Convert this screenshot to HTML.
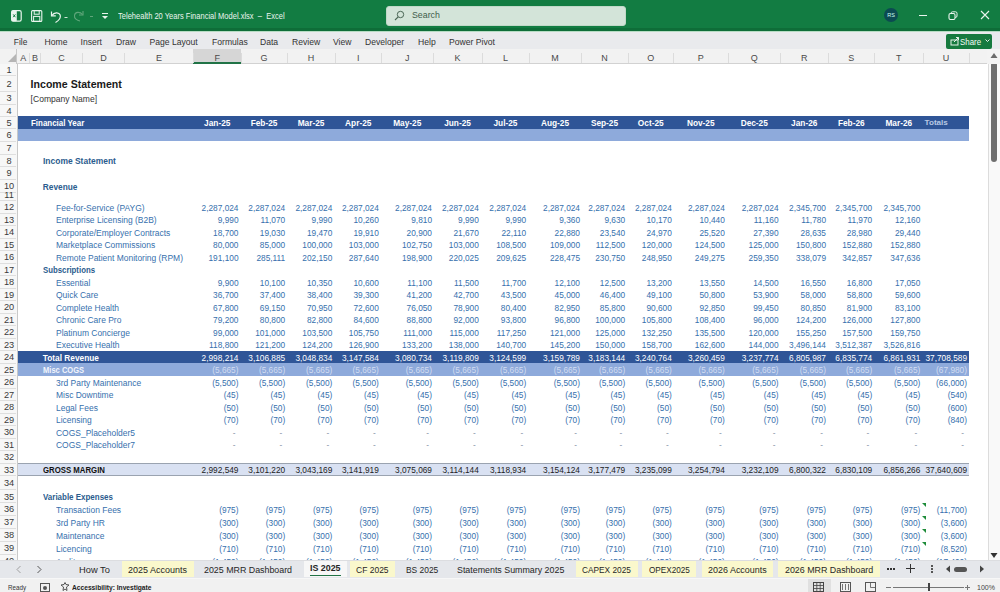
<!DOCTYPE html>
<html><head><meta charset="utf-8"><style>
*{box-sizing:border-box}
html,body{margin:0;padding:0}
body{width:1000px;height:592px;overflow:hidden;position:relative;background:#fff;font-family:"Liberation Sans",sans-serif}
.t{position:absolute;white-space:nowrap;font-size:8.3px;color:#3670ad}
.r{text-align:right}
.c{text-align:center}
.b{position:absolute}
.bd{font-weight:bold}
.abs{position:absolute}
</style></head><body>

<div class="b" style="left:17px;top:116px;width:952px;height:12.5px;background:#2f5597;"></div>
<div class="b" style="left:17px;top:128.5px;width:952px;height:12.5px;background:#8eaadb;"></div>
<div class="b" style="left:17px;top:350.5px;width:952px;height:12.5px;background:#2f5597;"></div>
<div class="b" style="left:17px;top:363.0px;width:952px;height:12.5px;background:#8eaadb;"></div>
<div class="b" style="left:17px;top:463.0px;width:952px;height:12.5px;background:#d9e1f2;border-top:1px solid #9aa3b0;border-bottom:1px solid #9aa3b0;"></div>
<div class="t bd" style="left:30.6px;top:75.7px;height:16.0px;line-height:16.0px;font-size:10.6px;color:#1a1a1a;">Income Statement</div>
<div class="t " style="left:30.6px;top:92.7px;height:12.5px;line-height:12.5px;font-size:8.56px;color:#333;">[Company Name]</div>
<div class="t bd" style="left:30.6px;top:117.2px;height:12.5px;line-height:12.5px;color:#fff;font-size:8.3px;transform:scaleX(0.957);transform-origin:0 50%;">Financial Year</div>
<div class="t c bd" style="left:193.5px;width:47.5px;top:117.2px;height:12.5px;line-height:12.5px;color:#fff;font-size:8.3px;">Jan-25</div>
<div class="t c bd" style="left:241px;width:46px;top:117.2px;height:12.5px;line-height:12.5px;color:#fff;font-size:8.3px;">Feb-25</div>
<div class="t c bd" style="left:287px;width:48px;top:117.2px;height:12.5px;line-height:12.5px;color:#fff;font-size:8.3px;">Mar-25</div>
<div class="t c bd" style="left:335px;width:46.5px;top:117.2px;height:12.5px;line-height:12.5px;color:#fff;font-size:8.3px;">Apr-25</div>
<div class="t c bd" style="left:381.5px;width:51.5px;top:117.2px;height:12.5px;line-height:12.5px;color:#fff;font-size:8.3px;">May-25</div>
<div class="t c bd" style="left:433px;width:49px;top:117.2px;height:12.5px;line-height:12.5px;color:#fff;font-size:8.3px;">Jun-25</div>
<div class="t c bd" style="left:482px;width:47px;top:117.2px;height:12.5px;line-height:12.5px;color:#fff;font-size:8.3px;">Jul-25</div>
<div class="t c bd" style="left:529px;width:52px;top:117.2px;height:12.5px;line-height:12.5px;color:#fff;font-size:8.3px;">Aug-25</div>
<div class="t c bd" style="left:581px;width:47px;top:117.2px;height:12.5px;line-height:12.5px;color:#fff;font-size:8.3px;">Sep-25</div>
<div class="t c bd" style="left:628px;width:45.5px;top:117.2px;height:12.5px;line-height:12.5px;color:#fff;font-size:8.3px;">Oct-25</div>
<div class="t c bd" style="left:673.5px;width:54.5px;top:117.2px;height:12.5px;line-height:12.5px;color:#fff;font-size:8.3px;">Nov-25</div>
<div class="t c bd" style="left:728px;width:52.5px;top:117.2px;height:12.5px;line-height:12.5px;color:#fff;font-size:8.3px;">Dec-25</div>
<div class="t c bd" style="left:780.5px;width:47.5px;top:117.2px;height:12.5px;line-height:12.5px;color:#fff;font-size:8.3px;">Jan-26</div>
<div class="t c bd" style="left:828px;width:46.5px;top:117.2px;height:12.5px;line-height:12.5px;color:#fff;font-size:8.3px;">Feb-26</div>
<div class="t c bd" style="left:874.5px;width:48.5px;top:117.2px;height:12.5px;line-height:12.5px;color:#fff;font-size:8.3px;">Mar-26</div>
<div class="t bd" style="left:924.6px;top:117.2px;height:12.5px;line-height:12.5px;color:#b9c8e4;font-size:8.1px;">Totals</div>
<div class="t bd" style="left:42.8px;top:155.2px;height:12.699999999999989px;line-height:12.699999999999989px;color:#2b5c8e;font-size:8.3px;transform:scaleX(1.02);transform-origin:0 50%;">Income Statement</div>
<div class="t bd" style="left:42.8px;top:180.5px;height:12.699999999999989px;line-height:12.699999999999989px;color:#2b5c8e;font-size:8.3px;transform:scaleX(1.0);transform-origin:0 50%;">Revenue</div>
<div class="t bd" style="left:42.8px;top:264.2px;height:12.5px;line-height:12.5px;color:#2b5c8e;font-size:8.3px;transform:scaleX(0.94);transform-origin:0 50%;">Subscriptions</div>
<div class="t bd" style="left:42.8px;top:491.09999999999997px;height:12.899999999999977px;line-height:12.899999999999977px;color:#2b5c8e;font-size:8.3px;transform:scaleX(0.96);transform-origin:0 50%;">Variable Expenses</div>
<div class="t " style="left:55.5px;top:201.7px;height:12.5px;line-height:12.5px;font-size:8.3px;transform:scaleX(1.02);transform-origin:0 50%;">Fee-for-Service (PAYG)</div>
<div class="t r " style="left:193.5px;width:45.0px;top:201.7px;height:12.5px;line-height:12.5px;">2,287,024</div>
<div class="t r " style="left:241px;width:44.19999999999999px;top:201.7px;height:12.5px;line-height:12.5px;">2,287,024</div>
<div class="t r " style="left:287px;width:45.30000000000001px;top:201.7px;height:12.5px;line-height:12.5px;">2,287,024</div>
<div class="t r " style="left:335px;width:43.80000000000001px;top:201.7px;height:12.5px;line-height:12.5px;">2,287,024</div>
<div class="t r " style="left:381.5px;width:50.5px;top:201.7px;height:12.5px;line-height:12.5px;">2,287,024</div>
<div class="t r " style="left:433px;width:45.80000000000001px;top:201.7px;height:12.5px;line-height:12.5px;">2,287,024</div>
<div class="t r " style="left:482px;width:44.200000000000045px;top:201.7px;height:12.5px;line-height:12.5px;">2,287,024</div>
<div class="t r " style="left:529px;width:51px;top:201.7px;height:12.5px;line-height:12.5px;">2,287,024</div>
<div class="t r " style="left:581px;width:44.200000000000045px;top:201.7px;height:12.5px;line-height:12.5px;">2,287,024</div>
<div class="t r " style="left:628px;width:43.799999999999955px;top:201.7px;height:12.5px;line-height:12.5px;">2,287,024</div>
<div class="t r " style="left:673.5px;width:51.299999999999955px;top:201.7px;height:12.5px;line-height:12.5px;">2,287,024</div>
<div class="t r " style="left:728px;width:50.60000000000002px;top:201.7px;height:12.5px;line-height:12.5px;">2,287,024</div>
<div class="t r " style="left:780.5px;width:45.5px;top:201.7px;height:12.5px;line-height:12.5px;">2,345,700</div>
<div class="t r " style="left:828px;width:44.200000000000045px;top:201.7px;height:12.5px;line-height:12.5px;">2,345,700</div>
<div class="t r " style="left:874.5px;width:45.799999999999955px;top:201.7px;height:12.5px;line-height:12.5px;">2,345,700</div>
<div class="t " style="left:55.5px;top:214.2px;height:12.5px;line-height:12.5px;font-size:8.3px;transform:scaleX(1.02);transform-origin:0 50%;">Enterprise Licensing (B2B)</div>
<div class="t r " style="left:193.5px;width:45.0px;top:214.2px;height:12.5px;line-height:12.5px;">9,990</div>
<div class="t r " style="left:241px;width:44.19999999999999px;top:214.2px;height:12.5px;line-height:12.5px;">11,070</div>
<div class="t r " style="left:287px;width:45.30000000000001px;top:214.2px;height:12.5px;line-height:12.5px;">9,990</div>
<div class="t r " style="left:335px;width:43.80000000000001px;top:214.2px;height:12.5px;line-height:12.5px;">10,260</div>
<div class="t r " style="left:381.5px;width:50.5px;top:214.2px;height:12.5px;line-height:12.5px;">9,810</div>
<div class="t r " style="left:433px;width:45.80000000000001px;top:214.2px;height:12.5px;line-height:12.5px;">9,990</div>
<div class="t r " style="left:482px;width:44.200000000000045px;top:214.2px;height:12.5px;line-height:12.5px;">9,990</div>
<div class="t r " style="left:529px;width:51px;top:214.2px;height:12.5px;line-height:12.5px;">9,360</div>
<div class="t r " style="left:581px;width:44.200000000000045px;top:214.2px;height:12.5px;line-height:12.5px;">9,630</div>
<div class="t r " style="left:628px;width:43.799999999999955px;top:214.2px;height:12.5px;line-height:12.5px;">10,170</div>
<div class="t r " style="left:673.5px;width:51.299999999999955px;top:214.2px;height:12.5px;line-height:12.5px;">10,440</div>
<div class="t r " style="left:728px;width:50.60000000000002px;top:214.2px;height:12.5px;line-height:12.5px;">11,160</div>
<div class="t r " style="left:780.5px;width:45.5px;top:214.2px;height:12.5px;line-height:12.5px;">11,780</div>
<div class="t r " style="left:828px;width:44.200000000000045px;top:214.2px;height:12.5px;line-height:12.5px;">11,970</div>
<div class="t r " style="left:874.5px;width:45.799999999999955px;top:214.2px;height:12.5px;line-height:12.5px;">12,160</div>
<div class="t " style="left:55.5px;top:226.7px;height:12.5px;line-height:12.5px;font-size:8.3px;transform:scaleX(1.02);transform-origin:0 50%;">Corporate/Employer Contracts</div>
<div class="t r " style="left:193.5px;width:45.0px;top:226.7px;height:12.5px;line-height:12.5px;">18,700</div>
<div class="t r " style="left:241px;width:44.19999999999999px;top:226.7px;height:12.5px;line-height:12.5px;">19,030</div>
<div class="t r " style="left:287px;width:45.30000000000001px;top:226.7px;height:12.5px;line-height:12.5px;">19,470</div>
<div class="t r " style="left:335px;width:43.80000000000001px;top:226.7px;height:12.5px;line-height:12.5px;">19,910</div>
<div class="t r " style="left:381.5px;width:50.5px;top:226.7px;height:12.5px;line-height:12.5px;">20,900</div>
<div class="t r " style="left:433px;width:45.80000000000001px;top:226.7px;height:12.5px;line-height:12.5px;">21,670</div>
<div class="t r " style="left:482px;width:44.200000000000045px;top:226.7px;height:12.5px;line-height:12.5px;">22,110</div>
<div class="t r " style="left:529px;width:51px;top:226.7px;height:12.5px;line-height:12.5px;">22,880</div>
<div class="t r " style="left:581px;width:44.200000000000045px;top:226.7px;height:12.5px;line-height:12.5px;">23,540</div>
<div class="t r " style="left:628px;width:43.799999999999955px;top:226.7px;height:12.5px;line-height:12.5px;">24,970</div>
<div class="t r " style="left:673.5px;width:51.299999999999955px;top:226.7px;height:12.5px;line-height:12.5px;">25,520</div>
<div class="t r " style="left:728px;width:50.60000000000002px;top:226.7px;height:12.5px;line-height:12.5px;">27,390</div>
<div class="t r " style="left:780.5px;width:45.5px;top:226.7px;height:12.5px;line-height:12.5px;">28,635</div>
<div class="t r " style="left:828px;width:44.200000000000045px;top:226.7px;height:12.5px;line-height:12.5px;">28,980</div>
<div class="t r " style="left:874.5px;width:45.799999999999955px;top:226.7px;height:12.5px;line-height:12.5px;">29,440</div>
<div class="t " style="left:55.5px;top:239.2px;height:12.5px;line-height:12.5px;font-size:8.3px;transform:scaleX(1.02);transform-origin:0 50%;">Marketplace Commissions</div>
<div class="t r " style="left:193.5px;width:45.0px;top:239.2px;height:12.5px;line-height:12.5px;">80,000</div>
<div class="t r " style="left:241px;width:44.19999999999999px;top:239.2px;height:12.5px;line-height:12.5px;">85,000</div>
<div class="t r " style="left:287px;width:45.30000000000001px;top:239.2px;height:12.5px;line-height:12.5px;">100,000</div>
<div class="t r " style="left:335px;width:43.80000000000001px;top:239.2px;height:12.5px;line-height:12.5px;">103,000</div>
<div class="t r " style="left:381.5px;width:50.5px;top:239.2px;height:12.5px;line-height:12.5px;">102,750</div>
<div class="t r " style="left:433px;width:45.80000000000001px;top:239.2px;height:12.5px;line-height:12.5px;">103,000</div>
<div class="t r " style="left:482px;width:44.200000000000045px;top:239.2px;height:12.5px;line-height:12.5px;">108,500</div>
<div class="t r " style="left:529px;width:51px;top:239.2px;height:12.5px;line-height:12.5px;">109,000</div>
<div class="t r " style="left:581px;width:44.200000000000045px;top:239.2px;height:12.5px;line-height:12.5px;">112,500</div>
<div class="t r " style="left:628px;width:43.799999999999955px;top:239.2px;height:12.5px;line-height:12.5px;">120,000</div>
<div class="t r " style="left:673.5px;width:51.299999999999955px;top:239.2px;height:12.5px;line-height:12.5px;">124,500</div>
<div class="t r " style="left:728px;width:50.60000000000002px;top:239.2px;height:12.5px;line-height:12.5px;">125,000</div>
<div class="t r " style="left:780.5px;width:45.5px;top:239.2px;height:12.5px;line-height:12.5px;">150,800</div>
<div class="t r " style="left:828px;width:44.200000000000045px;top:239.2px;height:12.5px;line-height:12.5px;">152,880</div>
<div class="t r " style="left:874.5px;width:45.799999999999955px;top:239.2px;height:12.5px;line-height:12.5px;">152,880</div>
<div class="t " style="left:55.5px;top:251.7px;height:12.5px;line-height:12.5px;font-size:8.3px;transform:scaleX(1.02);transform-origin:0 50%;">Remote Patient Monitoring (RPM)</div>
<div class="t r " style="left:193.5px;width:45.0px;top:251.7px;height:12.5px;line-height:12.5px;">191,100</div>
<div class="t r " style="left:241px;width:44.19999999999999px;top:251.7px;height:12.5px;line-height:12.5px;">285,111</div>
<div class="t r " style="left:287px;width:45.30000000000001px;top:251.7px;height:12.5px;line-height:12.5px;">202,150</div>
<div class="t r " style="left:335px;width:43.80000000000001px;top:251.7px;height:12.5px;line-height:12.5px;">287,640</div>
<div class="t r " style="left:381.5px;width:50.5px;top:251.7px;height:12.5px;line-height:12.5px;">198,900</div>
<div class="t r " style="left:433px;width:45.80000000000001px;top:251.7px;height:12.5px;line-height:12.5px;">220,025</div>
<div class="t r " style="left:482px;width:44.200000000000045px;top:251.7px;height:12.5px;line-height:12.5px;">209,625</div>
<div class="t r " style="left:529px;width:51px;top:251.7px;height:12.5px;line-height:12.5px;">228,475</div>
<div class="t r " style="left:581px;width:44.200000000000045px;top:251.7px;height:12.5px;line-height:12.5px;">230,750</div>
<div class="t r " style="left:628px;width:43.799999999999955px;top:251.7px;height:12.5px;line-height:12.5px;">248,950</div>
<div class="t r " style="left:673.5px;width:51.299999999999955px;top:251.7px;height:12.5px;line-height:12.5px;">249,275</div>
<div class="t r " style="left:728px;width:50.60000000000002px;top:251.7px;height:12.5px;line-height:12.5px;">259,350</div>
<div class="t r " style="left:780.5px;width:45.5px;top:251.7px;height:12.5px;line-height:12.5px;">338,079</div>
<div class="t r " style="left:828px;width:44.200000000000045px;top:251.7px;height:12.5px;line-height:12.5px;">342,857</div>
<div class="t r " style="left:874.5px;width:45.799999999999955px;top:251.7px;height:12.5px;line-height:12.5px;">347,636</div>
<div class="t " style="left:55.5px;top:276.7px;height:12.5px;line-height:12.5px;font-size:8.3px;transform:scaleX(1.02);transform-origin:0 50%;">Essential</div>
<div class="t r " style="left:193.5px;width:45.0px;top:276.7px;height:12.5px;line-height:12.5px;">9,900</div>
<div class="t r " style="left:241px;width:44.19999999999999px;top:276.7px;height:12.5px;line-height:12.5px;">10,100</div>
<div class="t r " style="left:287px;width:45.30000000000001px;top:276.7px;height:12.5px;line-height:12.5px;">10,350</div>
<div class="t r " style="left:335px;width:43.80000000000001px;top:276.7px;height:12.5px;line-height:12.5px;">10,600</div>
<div class="t r " style="left:381.5px;width:50.5px;top:276.7px;height:12.5px;line-height:12.5px;">11,100</div>
<div class="t r " style="left:433px;width:45.80000000000001px;top:276.7px;height:12.5px;line-height:12.5px;">11,500</div>
<div class="t r " style="left:482px;width:44.200000000000045px;top:276.7px;height:12.5px;line-height:12.5px;">11,700</div>
<div class="t r " style="left:529px;width:51px;top:276.7px;height:12.5px;line-height:12.5px;">12,100</div>
<div class="t r " style="left:581px;width:44.200000000000045px;top:276.7px;height:12.5px;line-height:12.5px;">12,500</div>
<div class="t r " style="left:628px;width:43.799999999999955px;top:276.7px;height:12.5px;line-height:12.5px;">13,200</div>
<div class="t r " style="left:673.5px;width:51.299999999999955px;top:276.7px;height:12.5px;line-height:12.5px;">13,550</div>
<div class="t r " style="left:728px;width:50.60000000000002px;top:276.7px;height:12.5px;line-height:12.5px;">14,500</div>
<div class="t r " style="left:780.5px;width:45.5px;top:276.7px;height:12.5px;line-height:12.5px;">16,550</div>
<div class="t r " style="left:828px;width:44.200000000000045px;top:276.7px;height:12.5px;line-height:12.5px;">16,800</div>
<div class="t r " style="left:874.5px;width:45.799999999999955px;top:276.7px;height:12.5px;line-height:12.5px;">17,050</div>
<div class="t " style="left:55.5px;top:289.2px;height:12.5px;line-height:12.5px;font-size:8.3px;transform:scaleX(1.02);transform-origin:0 50%;">Quick Care</div>
<div class="t r " style="left:193.5px;width:45.0px;top:289.2px;height:12.5px;line-height:12.5px;">36,700</div>
<div class="t r " style="left:241px;width:44.19999999999999px;top:289.2px;height:12.5px;line-height:12.5px;">37,400</div>
<div class="t r " style="left:287px;width:45.30000000000001px;top:289.2px;height:12.5px;line-height:12.5px;">38,400</div>
<div class="t r " style="left:335px;width:43.80000000000001px;top:289.2px;height:12.5px;line-height:12.5px;">39,300</div>
<div class="t r " style="left:381.5px;width:50.5px;top:289.2px;height:12.5px;line-height:12.5px;">41,200</div>
<div class="t r " style="left:433px;width:45.80000000000001px;top:289.2px;height:12.5px;line-height:12.5px;">42,700</div>
<div class="t r " style="left:482px;width:44.200000000000045px;top:289.2px;height:12.5px;line-height:12.5px;">43,500</div>
<div class="t r " style="left:529px;width:51px;top:289.2px;height:12.5px;line-height:12.5px;">45,000</div>
<div class="t r " style="left:581px;width:44.200000000000045px;top:289.2px;height:12.5px;line-height:12.5px;">46,400</div>
<div class="t r " style="left:628px;width:43.799999999999955px;top:289.2px;height:12.5px;line-height:12.5px;">49,100</div>
<div class="t r " style="left:673.5px;width:51.299999999999955px;top:289.2px;height:12.5px;line-height:12.5px;">50,800</div>
<div class="t r " style="left:728px;width:50.60000000000002px;top:289.2px;height:12.5px;line-height:12.5px;">53,900</div>
<div class="t r " style="left:780.5px;width:45.5px;top:289.2px;height:12.5px;line-height:12.5px;">58,000</div>
<div class="t r " style="left:828px;width:44.200000000000045px;top:289.2px;height:12.5px;line-height:12.5px;">58,800</div>
<div class="t r " style="left:874.5px;width:45.799999999999955px;top:289.2px;height:12.5px;line-height:12.5px;">59,600</div>
<div class="t " style="left:55.5px;top:301.7px;height:12.5px;line-height:12.5px;font-size:8.3px;transform:scaleX(1.02);transform-origin:0 50%;">Complete Health</div>
<div class="t r " style="left:193.5px;width:45.0px;top:301.7px;height:12.5px;line-height:12.5px;">67,800</div>
<div class="t r " style="left:241px;width:44.19999999999999px;top:301.7px;height:12.5px;line-height:12.5px;">69,150</div>
<div class="t r " style="left:287px;width:45.30000000000001px;top:301.7px;height:12.5px;line-height:12.5px;">70,950</div>
<div class="t r " style="left:335px;width:43.80000000000001px;top:301.7px;height:12.5px;line-height:12.5px;">72,600</div>
<div class="t r " style="left:381.5px;width:50.5px;top:301.7px;height:12.5px;line-height:12.5px;">76,050</div>
<div class="t r " style="left:433px;width:45.80000000000001px;top:301.7px;height:12.5px;line-height:12.5px;">78,900</div>
<div class="t r " style="left:482px;width:44.200000000000045px;top:301.7px;height:12.5px;line-height:12.5px;">80,400</div>
<div class="t r " style="left:529px;width:51px;top:301.7px;height:12.5px;line-height:12.5px;">82,950</div>
<div class="t r " style="left:581px;width:44.200000000000045px;top:301.7px;height:12.5px;line-height:12.5px;">85,800</div>
<div class="t r " style="left:628px;width:43.799999999999955px;top:301.7px;height:12.5px;line-height:12.5px;">90,600</div>
<div class="t r " style="left:673.5px;width:51.299999999999955px;top:301.7px;height:12.5px;line-height:12.5px;">92,850</div>
<div class="t r " style="left:728px;width:50.60000000000002px;top:301.7px;height:12.5px;line-height:12.5px;">99,450</div>
<div class="t r " style="left:780.5px;width:45.5px;top:301.7px;height:12.5px;line-height:12.5px;">80,850</div>
<div class="t r " style="left:828px;width:44.200000000000045px;top:301.7px;height:12.5px;line-height:12.5px;">81,900</div>
<div class="t r " style="left:874.5px;width:45.799999999999955px;top:301.7px;height:12.5px;line-height:12.5px;">83,100</div>
<div class="t " style="left:55.5px;top:314.2px;height:12.5px;line-height:12.5px;font-size:8.3px;transform:scaleX(1.02);transform-origin:0 50%;">Chronic Care Pro</div>
<div class="t r " style="left:193.5px;width:45.0px;top:314.2px;height:12.5px;line-height:12.5px;">79,200</div>
<div class="t r " style="left:241px;width:44.19999999999999px;top:314.2px;height:12.5px;line-height:12.5px;">80,800</div>
<div class="t r " style="left:287px;width:45.30000000000001px;top:314.2px;height:12.5px;line-height:12.5px;">82,800</div>
<div class="t r " style="left:335px;width:43.80000000000001px;top:314.2px;height:12.5px;line-height:12.5px;">84,600</div>
<div class="t r " style="left:381.5px;width:50.5px;top:314.2px;height:12.5px;line-height:12.5px;">88,800</div>
<div class="t r " style="left:433px;width:45.80000000000001px;top:314.2px;height:12.5px;line-height:12.5px;">92,000</div>
<div class="t r " style="left:482px;width:44.200000000000045px;top:314.2px;height:12.5px;line-height:12.5px;">93,800</div>
<div class="t r " style="left:529px;width:51px;top:314.2px;height:12.5px;line-height:12.5px;">96,800</div>
<div class="t r " style="left:581px;width:44.200000000000045px;top:314.2px;height:12.5px;line-height:12.5px;">100,000</div>
<div class="t r " style="left:628px;width:43.799999999999955px;top:314.2px;height:12.5px;line-height:12.5px;">105,800</div>
<div class="t r " style="left:673.5px;width:51.299999999999955px;top:314.2px;height:12.5px;line-height:12.5px;">108,400</div>
<div class="t r " style="left:728px;width:50.60000000000002px;top:314.2px;height:12.5px;line-height:12.5px;">96,000</div>
<div class="t r " style="left:780.5px;width:45.5px;top:314.2px;height:12.5px;line-height:12.5px;">124,200</div>
<div class="t r " style="left:828px;width:44.200000000000045px;top:314.2px;height:12.5px;line-height:12.5px;">126,000</div>
<div class="t r " style="left:874.5px;width:45.799999999999955px;top:314.2px;height:12.5px;line-height:12.5px;">127,800</div>
<div class="t " style="left:55.5px;top:326.7px;height:12.5px;line-height:12.5px;font-size:8.3px;transform:scaleX(1.02);transform-origin:0 50%;">Platinum Concierge</div>
<div class="t r " style="left:193.5px;width:45.0px;top:326.7px;height:12.5px;line-height:12.5px;">99,000</div>
<div class="t r " style="left:241px;width:44.19999999999999px;top:326.7px;height:12.5px;line-height:12.5px;">101,000</div>
<div class="t r " style="left:287px;width:45.30000000000001px;top:326.7px;height:12.5px;line-height:12.5px;">103,500</div>
<div class="t r " style="left:335px;width:43.80000000000001px;top:326.7px;height:12.5px;line-height:12.5px;">105,750</div>
<div class="t r " style="left:381.5px;width:50.5px;top:326.7px;height:12.5px;line-height:12.5px;">111,000</div>
<div class="t r " style="left:433px;width:45.80000000000001px;top:326.7px;height:12.5px;line-height:12.5px;">115,000</div>
<div class="t r " style="left:482px;width:44.200000000000045px;top:326.7px;height:12.5px;line-height:12.5px;">117,250</div>
<div class="t r " style="left:529px;width:51px;top:326.7px;height:12.5px;line-height:12.5px;">121,000</div>
<div class="t r " style="left:581px;width:44.200000000000045px;top:326.7px;height:12.5px;line-height:12.5px;">125,000</div>
<div class="t r " style="left:628px;width:43.799999999999955px;top:326.7px;height:12.5px;line-height:12.5px;">132,250</div>
<div class="t r " style="left:673.5px;width:51.299999999999955px;top:326.7px;height:12.5px;line-height:12.5px;">135,500</div>
<div class="t r " style="left:728px;width:50.60000000000002px;top:326.7px;height:12.5px;line-height:12.5px;">120,000</div>
<div class="t r " style="left:780.5px;width:45.5px;top:326.7px;height:12.5px;line-height:12.5px;">155,250</div>
<div class="t r " style="left:828px;width:44.200000000000045px;top:326.7px;height:12.5px;line-height:12.5px;">157,500</div>
<div class="t r " style="left:874.5px;width:45.799999999999955px;top:326.7px;height:12.5px;line-height:12.5px;">159,750</div>
<div class="t " style="left:55.5px;top:339.2px;height:12.5px;line-height:12.5px;font-size:8.3px;transform:scaleX(1.02);transform-origin:0 50%;">Executive Health</div>
<div class="t r " style="left:193.5px;width:45.0px;top:339.2px;height:12.5px;line-height:12.5px;">118,800</div>
<div class="t r " style="left:241px;width:44.19999999999999px;top:339.2px;height:12.5px;line-height:12.5px;">121,200</div>
<div class="t r " style="left:287px;width:45.30000000000001px;top:339.2px;height:12.5px;line-height:12.5px;">124,200</div>
<div class="t r " style="left:335px;width:43.80000000000001px;top:339.2px;height:12.5px;line-height:12.5px;">126,900</div>
<div class="t r " style="left:381.5px;width:50.5px;top:339.2px;height:12.5px;line-height:12.5px;">133,200</div>
<div class="t r " style="left:433px;width:45.80000000000001px;top:339.2px;height:12.5px;line-height:12.5px;">138,000</div>
<div class="t r " style="left:482px;width:44.200000000000045px;top:339.2px;height:12.5px;line-height:12.5px;">140,700</div>
<div class="t r " style="left:529px;width:51px;top:339.2px;height:12.5px;line-height:12.5px;">145,200</div>
<div class="t r " style="left:581px;width:44.200000000000045px;top:339.2px;height:12.5px;line-height:12.5px;">150,000</div>
<div class="t r " style="left:628px;width:43.799999999999955px;top:339.2px;height:12.5px;line-height:12.5px;">158,700</div>
<div class="t r " style="left:673.5px;width:51.299999999999955px;top:339.2px;height:12.5px;line-height:12.5px;">162,600</div>
<div class="t r " style="left:728px;width:50.60000000000002px;top:339.2px;height:12.5px;line-height:12.5px;">144,000</div>
<div class="t r " style="left:780.5px;width:45.5px;top:339.2px;height:12.5px;line-height:12.5px;">3,496,144</div>
<div class="t r " style="left:828px;width:44.200000000000045px;top:339.2px;height:12.5px;line-height:12.5px;">3,512,387</div>
<div class="t r " style="left:874.5px;width:45.799999999999955px;top:339.2px;height:12.5px;line-height:12.5px;">3,526,816</div>
<div class="t " style="left:55.5px;top:376.7px;height:12.5px;line-height:12.5px;font-size:8.3px;transform:scaleX(1.02);transform-origin:0 50%;">3rd Party Maintenance</div>
<div class="t r " style="left:193.5px;width:45.0px;top:376.7px;height:12.5px;line-height:12.5px;">(5,500)</div>
<div class="t r " style="left:241px;width:44.19999999999999px;top:376.7px;height:12.5px;line-height:12.5px;">(5,500)</div>
<div class="t r " style="left:287px;width:45.30000000000001px;top:376.7px;height:12.5px;line-height:12.5px;">(5,500)</div>
<div class="t r " style="left:335px;width:43.80000000000001px;top:376.7px;height:12.5px;line-height:12.5px;">(5,500)</div>
<div class="t r " style="left:381.5px;width:50.5px;top:376.7px;height:12.5px;line-height:12.5px;">(5,500)</div>
<div class="t r " style="left:433px;width:45.80000000000001px;top:376.7px;height:12.5px;line-height:12.5px;">(5,500)</div>
<div class="t r " style="left:482px;width:44.200000000000045px;top:376.7px;height:12.5px;line-height:12.5px;">(5,500)</div>
<div class="t r " style="left:529px;width:51px;top:376.7px;height:12.5px;line-height:12.5px;">(5,500)</div>
<div class="t r " style="left:581px;width:44.200000000000045px;top:376.7px;height:12.5px;line-height:12.5px;">(5,500)</div>
<div class="t r " style="left:628px;width:43.799999999999955px;top:376.7px;height:12.5px;line-height:12.5px;">(5,500)</div>
<div class="t r " style="left:673.5px;width:51.299999999999955px;top:376.7px;height:12.5px;line-height:12.5px;">(5,500)</div>
<div class="t r " style="left:728px;width:50.60000000000002px;top:376.7px;height:12.5px;line-height:12.5px;">(5,500)</div>
<div class="t r " style="left:780.5px;width:45.5px;top:376.7px;height:12.5px;line-height:12.5px;">(5,500)</div>
<div class="t r " style="left:828px;width:44.200000000000045px;top:376.7px;height:12.5px;line-height:12.5px;">(5,500)</div>
<div class="t r " style="left:874.5px;width:45.799999999999955px;top:376.7px;height:12.5px;line-height:12.5px;">(5,500)</div>
<div class="t r " style="left:923px;width:44px;top:376.7px;height:12.5px;line-height:12.5px;">(66,000)</div>
<div class="t " style="left:55.5px;top:389.2px;height:12.5px;line-height:12.5px;font-size:8.3px;transform:scaleX(1.02);transform-origin:0 50%;">Misc Downtime</div>
<div class="t r " style="left:193.5px;width:45.0px;top:389.2px;height:12.5px;line-height:12.5px;">(45)</div>
<div class="t r " style="left:241px;width:44.19999999999999px;top:389.2px;height:12.5px;line-height:12.5px;">(45)</div>
<div class="t r " style="left:287px;width:45.30000000000001px;top:389.2px;height:12.5px;line-height:12.5px;">(45)</div>
<div class="t r " style="left:335px;width:43.80000000000001px;top:389.2px;height:12.5px;line-height:12.5px;">(45)</div>
<div class="t r " style="left:381.5px;width:50.5px;top:389.2px;height:12.5px;line-height:12.5px;">(45)</div>
<div class="t r " style="left:433px;width:45.80000000000001px;top:389.2px;height:12.5px;line-height:12.5px;">(45)</div>
<div class="t r " style="left:482px;width:44.200000000000045px;top:389.2px;height:12.5px;line-height:12.5px;">(45)</div>
<div class="t r " style="left:529px;width:51px;top:389.2px;height:12.5px;line-height:12.5px;">(45)</div>
<div class="t r " style="left:581px;width:44.200000000000045px;top:389.2px;height:12.5px;line-height:12.5px;">(45)</div>
<div class="t r " style="left:628px;width:43.799999999999955px;top:389.2px;height:12.5px;line-height:12.5px;">(45)</div>
<div class="t r " style="left:673.5px;width:51.299999999999955px;top:389.2px;height:12.5px;line-height:12.5px;">(45)</div>
<div class="t r " style="left:728px;width:50.60000000000002px;top:389.2px;height:12.5px;line-height:12.5px;">(45)</div>
<div class="t r " style="left:780.5px;width:45.5px;top:389.2px;height:12.5px;line-height:12.5px;">(45)</div>
<div class="t r " style="left:828px;width:44.200000000000045px;top:389.2px;height:12.5px;line-height:12.5px;">(45)</div>
<div class="t r " style="left:874.5px;width:45.799999999999955px;top:389.2px;height:12.5px;line-height:12.5px;">(45)</div>
<div class="t r " style="left:923px;width:44px;top:389.2px;height:12.5px;line-height:12.5px;">(540)</div>
<div class="t " style="left:55.5px;top:401.7px;height:12.5px;line-height:12.5px;font-size:8.3px;transform:scaleX(1.02);transform-origin:0 50%;">Legal Fees</div>
<div class="t r " style="left:193.5px;width:45.0px;top:401.7px;height:12.5px;line-height:12.5px;">(50)</div>
<div class="t r " style="left:241px;width:44.19999999999999px;top:401.7px;height:12.5px;line-height:12.5px;">(50)</div>
<div class="t r " style="left:287px;width:45.30000000000001px;top:401.7px;height:12.5px;line-height:12.5px;">(50)</div>
<div class="t r " style="left:335px;width:43.80000000000001px;top:401.7px;height:12.5px;line-height:12.5px;">(50)</div>
<div class="t r " style="left:381.5px;width:50.5px;top:401.7px;height:12.5px;line-height:12.5px;">(50)</div>
<div class="t r " style="left:433px;width:45.80000000000001px;top:401.7px;height:12.5px;line-height:12.5px;">(50)</div>
<div class="t r " style="left:482px;width:44.200000000000045px;top:401.7px;height:12.5px;line-height:12.5px;">(50)</div>
<div class="t r " style="left:529px;width:51px;top:401.7px;height:12.5px;line-height:12.5px;">(50)</div>
<div class="t r " style="left:581px;width:44.200000000000045px;top:401.7px;height:12.5px;line-height:12.5px;">(50)</div>
<div class="t r " style="left:628px;width:43.799999999999955px;top:401.7px;height:12.5px;line-height:12.5px;">(50)</div>
<div class="t r " style="left:673.5px;width:51.299999999999955px;top:401.7px;height:12.5px;line-height:12.5px;">(50)</div>
<div class="t r " style="left:728px;width:50.60000000000002px;top:401.7px;height:12.5px;line-height:12.5px;">(50)</div>
<div class="t r " style="left:780.5px;width:45.5px;top:401.7px;height:12.5px;line-height:12.5px;">(50)</div>
<div class="t r " style="left:828px;width:44.200000000000045px;top:401.7px;height:12.5px;line-height:12.5px;">(50)</div>
<div class="t r " style="left:874.5px;width:45.799999999999955px;top:401.7px;height:12.5px;line-height:12.5px;">(50)</div>
<div class="t r " style="left:923px;width:44px;top:401.7px;height:12.5px;line-height:12.5px;">(600)</div>
<div class="t " style="left:55.5px;top:414.2px;height:12.5px;line-height:12.5px;font-size:8.3px;transform:scaleX(1.02);transform-origin:0 50%;">Licensing</div>
<div class="t r " style="left:193.5px;width:45.0px;top:414.2px;height:12.5px;line-height:12.5px;">(70)</div>
<div class="t r " style="left:241px;width:44.19999999999999px;top:414.2px;height:12.5px;line-height:12.5px;">(70)</div>
<div class="t r " style="left:287px;width:45.30000000000001px;top:414.2px;height:12.5px;line-height:12.5px;">(70)</div>
<div class="t r " style="left:335px;width:43.80000000000001px;top:414.2px;height:12.5px;line-height:12.5px;">(70)</div>
<div class="t r " style="left:381.5px;width:50.5px;top:414.2px;height:12.5px;line-height:12.5px;">(70)</div>
<div class="t r " style="left:433px;width:45.80000000000001px;top:414.2px;height:12.5px;line-height:12.5px;">(70)</div>
<div class="t r " style="left:482px;width:44.200000000000045px;top:414.2px;height:12.5px;line-height:12.5px;">(70)</div>
<div class="t r " style="left:529px;width:51px;top:414.2px;height:12.5px;line-height:12.5px;">(70)</div>
<div class="t r " style="left:581px;width:44.200000000000045px;top:414.2px;height:12.5px;line-height:12.5px;">(70)</div>
<div class="t r " style="left:628px;width:43.799999999999955px;top:414.2px;height:12.5px;line-height:12.5px;">(70)</div>
<div class="t r " style="left:673.5px;width:51.299999999999955px;top:414.2px;height:12.5px;line-height:12.5px;">(70)</div>
<div class="t r " style="left:728px;width:50.60000000000002px;top:414.2px;height:12.5px;line-height:12.5px;">(70)</div>
<div class="t r " style="left:780.5px;width:45.5px;top:414.2px;height:12.5px;line-height:12.5px;">(70)</div>
<div class="t r " style="left:828px;width:44.200000000000045px;top:414.2px;height:12.5px;line-height:12.5px;">(70)</div>
<div class="t r " style="left:874.5px;width:45.799999999999955px;top:414.2px;height:12.5px;line-height:12.5px;">(70)</div>
<div class="t r " style="left:923px;width:44px;top:414.2px;height:12.5px;line-height:12.5px;">(840)</div>
<div class="t " style="left:55.5px;top:426.7px;height:12.5px;line-height:12.5px;font-size:8.3px;transform:scaleX(1.02);transform-origin:0 50%;">COGS_Placeholder5</div>
<div class="t r " style="left:193.5px;width:42.0px;top:426.7px;height:12.5px;line-height:12.5px;color:#8a96a8;">-</div>
<div class="t r " style="left:241px;width:41.19999999999999px;top:426.7px;height:12.5px;line-height:12.5px;color:#8a96a8;">-</div>
<div class="t r " style="left:287px;width:42.30000000000001px;top:426.7px;height:12.5px;line-height:12.5px;color:#8a96a8;">-</div>
<div class="t r " style="left:335px;width:40.80000000000001px;top:426.7px;height:12.5px;line-height:12.5px;color:#8a96a8;">-</div>
<div class="t r " style="left:381.5px;width:47.5px;top:426.7px;height:12.5px;line-height:12.5px;color:#8a96a8;">-</div>
<div class="t r " style="left:433px;width:42.80000000000001px;top:426.7px;height:12.5px;line-height:12.5px;color:#8a96a8;">-</div>
<div class="t r " style="left:482px;width:41.200000000000045px;top:426.7px;height:12.5px;line-height:12.5px;color:#8a96a8;">-</div>
<div class="t r " style="left:529px;width:48px;top:426.7px;height:12.5px;line-height:12.5px;color:#8a96a8;">-</div>
<div class="t r " style="left:581px;width:41.200000000000045px;top:426.7px;height:12.5px;line-height:12.5px;color:#8a96a8;">-</div>
<div class="t r " style="left:628px;width:40.799999999999955px;top:426.7px;height:12.5px;line-height:12.5px;color:#8a96a8;">-</div>
<div class="t r " style="left:673.5px;width:48.299999999999955px;top:426.7px;height:12.5px;line-height:12.5px;color:#8a96a8;">-</div>
<div class="t r " style="left:728px;width:47.60000000000002px;top:426.7px;height:12.5px;line-height:12.5px;color:#8a96a8;">-</div>
<div class="t r " style="left:780.5px;width:42.5px;top:426.7px;height:12.5px;line-height:12.5px;color:#8a96a8;">-</div>
<div class="t r " style="left:828px;width:41.200000000000045px;top:426.7px;height:12.5px;line-height:12.5px;color:#8a96a8;">-</div>
<div class="t r " style="left:874.5px;width:42.799999999999955px;top:426.7px;height:12.5px;line-height:12.5px;color:#8a96a8;">-</div>
<div class="t r " style="left:923px;width:41px;top:426.7px;height:12.5px;line-height:12.5px;color:#8a96a8;">-</div>
<div class="t " style="left:55.5px;top:439.2px;height:12.5px;line-height:12.5px;font-size:8.3px;transform:scaleX(1.02);transform-origin:0 50%;">COGS_Placeholder7</div>
<div class="t r " style="left:193.5px;width:42.0px;top:439.2px;height:12.5px;line-height:12.5px;color:#8a96a8;">-</div>
<div class="t r " style="left:241px;width:41.19999999999999px;top:439.2px;height:12.5px;line-height:12.5px;color:#8a96a8;">-</div>
<div class="t r " style="left:287px;width:42.30000000000001px;top:439.2px;height:12.5px;line-height:12.5px;color:#8a96a8;">-</div>
<div class="t r " style="left:335px;width:40.80000000000001px;top:439.2px;height:12.5px;line-height:12.5px;color:#8a96a8;">-</div>
<div class="t r " style="left:381.5px;width:47.5px;top:439.2px;height:12.5px;line-height:12.5px;color:#8a96a8;">-</div>
<div class="t r " style="left:433px;width:42.80000000000001px;top:439.2px;height:12.5px;line-height:12.5px;color:#8a96a8;">-</div>
<div class="t r " style="left:482px;width:41.200000000000045px;top:439.2px;height:12.5px;line-height:12.5px;color:#8a96a8;">-</div>
<div class="t r " style="left:529px;width:48px;top:439.2px;height:12.5px;line-height:12.5px;color:#8a96a8;">-</div>
<div class="t r " style="left:581px;width:41.200000000000045px;top:439.2px;height:12.5px;line-height:12.5px;color:#8a96a8;">-</div>
<div class="t r " style="left:628px;width:40.799999999999955px;top:439.2px;height:12.5px;line-height:12.5px;color:#8a96a8;">-</div>
<div class="t r " style="left:673.5px;width:48.299999999999955px;top:439.2px;height:12.5px;line-height:12.5px;color:#8a96a8;">-</div>
<div class="t r " style="left:728px;width:47.60000000000002px;top:439.2px;height:12.5px;line-height:12.5px;color:#8a96a8;">-</div>
<div class="t r " style="left:780.5px;width:42.5px;top:439.2px;height:12.5px;line-height:12.5px;color:#8a96a8;">-</div>
<div class="t r " style="left:828px;width:41.200000000000045px;top:439.2px;height:12.5px;line-height:12.5px;color:#8a96a8;">-</div>
<div class="t r " style="left:874.5px;width:42.799999999999955px;top:439.2px;height:12.5px;line-height:12.5px;color:#8a96a8;">-</div>
<div class="t r " style="left:923px;width:41px;top:439.2px;height:12.5px;line-height:12.5px;color:#8a96a8;">-</div>
<div class="t " style="left:55.5px;top:503.99999999999994px;height:12.899999999999977px;line-height:12.899999999999977px;font-size:8.3px;transform:scaleX(1.02);transform-origin:0 50%;">Transaction Fees</div>
<div class="t r " style="left:193.5px;width:45.0px;top:503.99999999999994px;height:12.899999999999977px;line-height:12.899999999999977px;">(975)</div>
<div class="t r " style="left:241px;width:44.19999999999999px;top:503.99999999999994px;height:12.899999999999977px;line-height:12.899999999999977px;">(975)</div>
<div class="t r " style="left:287px;width:45.30000000000001px;top:503.99999999999994px;height:12.899999999999977px;line-height:12.899999999999977px;">(975)</div>
<div class="t r " style="left:335px;width:43.80000000000001px;top:503.99999999999994px;height:12.899999999999977px;line-height:12.899999999999977px;">(975)</div>
<div class="t r " style="left:381.5px;width:50.5px;top:503.99999999999994px;height:12.899999999999977px;line-height:12.899999999999977px;">(975)</div>
<div class="t r " style="left:433px;width:45.80000000000001px;top:503.99999999999994px;height:12.899999999999977px;line-height:12.899999999999977px;">(975)</div>
<div class="t r " style="left:482px;width:44.200000000000045px;top:503.99999999999994px;height:12.899999999999977px;line-height:12.899999999999977px;">(975)</div>
<div class="t r " style="left:529px;width:51px;top:503.99999999999994px;height:12.899999999999977px;line-height:12.899999999999977px;">(975)</div>
<div class="t r " style="left:581px;width:44.200000000000045px;top:503.99999999999994px;height:12.899999999999977px;line-height:12.899999999999977px;">(975)</div>
<div class="t r " style="left:628px;width:43.799999999999955px;top:503.99999999999994px;height:12.899999999999977px;line-height:12.899999999999977px;">(975)</div>
<div class="t r " style="left:673.5px;width:51.299999999999955px;top:503.99999999999994px;height:12.899999999999977px;line-height:12.899999999999977px;">(975)</div>
<div class="t r " style="left:728px;width:50.60000000000002px;top:503.99999999999994px;height:12.899999999999977px;line-height:12.899999999999977px;">(975)</div>
<div class="t r " style="left:780.5px;width:45.5px;top:503.99999999999994px;height:12.899999999999977px;line-height:12.899999999999977px;">(975)</div>
<div class="t r " style="left:828px;width:44.200000000000045px;top:503.99999999999994px;height:12.899999999999977px;line-height:12.899999999999977px;">(975)</div>
<div class="t r " style="left:874.5px;width:45.799999999999955px;top:503.99999999999994px;height:12.899999999999977px;line-height:12.899999999999977px;">(975)</div>
<div class="t r " style="left:923px;width:44px;top:503.99999999999994px;height:12.899999999999977px;line-height:12.899999999999977px;">(11,700)</div>
<div class="t " style="left:55.5px;top:516.9px;height:12.900000000000091px;line-height:12.900000000000091px;font-size:8.3px;transform:scaleX(1.02);transform-origin:0 50%;">3rd Party HR</div>
<div class="t r " style="left:193.5px;width:45.0px;top:516.9px;height:12.900000000000091px;line-height:12.900000000000091px;">(300)</div>
<div class="t r " style="left:241px;width:44.19999999999999px;top:516.9px;height:12.900000000000091px;line-height:12.900000000000091px;">(300)</div>
<div class="t r " style="left:287px;width:45.30000000000001px;top:516.9px;height:12.900000000000091px;line-height:12.900000000000091px;">(300)</div>
<div class="t r " style="left:335px;width:43.80000000000001px;top:516.9px;height:12.900000000000091px;line-height:12.900000000000091px;">(300)</div>
<div class="t r " style="left:381.5px;width:50.5px;top:516.9px;height:12.900000000000091px;line-height:12.900000000000091px;">(300)</div>
<div class="t r " style="left:433px;width:45.80000000000001px;top:516.9px;height:12.900000000000091px;line-height:12.900000000000091px;">(300)</div>
<div class="t r " style="left:482px;width:44.200000000000045px;top:516.9px;height:12.900000000000091px;line-height:12.900000000000091px;">(300)</div>
<div class="t r " style="left:529px;width:51px;top:516.9px;height:12.900000000000091px;line-height:12.900000000000091px;">(300)</div>
<div class="t r " style="left:581px;width:44.200000000000045px;top:516.9px;height:12.900000000000091px;line-height:12.900000000000091px;">(300)</div>
<div class="t r " style="left:628px;width:43.799999999999955px;top:516.9px;height:12.900000000000091px;line-height:12.900000000000091px;">(300)</div>
<div class="t r " style="left:673.5px;width:51.299999999999955px;top:516.9px;height:12.900000000000091px;line-height:12.900000000000091px;">(300)</div>
<div class="t r " style="left:728px;width:50.60000000000002px;top:516.9px;height:12.900000000000091px;line-height:12.900000000000091px;">(300)</div>
<div class="t r " style="left:780.5px;width:45.5px;top:516.9px;height:12.900000000000091px;line-height:12.900000000000091px;">(300)</div>
<div class="t r " style="left:828px;width:44.200000000000045px;top:516.9px;height:12.900000000000091px;line-height:12.900000000000091px;">(300)</div>
<div class="t r " style="left:874.5px;width:45.799999999999955px;top:516.9px;height:12.900000000000091px;line-height:12.900000000000091px;">(300)</div>
<div class="t r " style="left:923px;width:44px;top:516.9px;height:12.900000000000091px;line-height:12.900000000000091px;">(3,600)</div>
<div class="t " style="left:55.5px;top:529.8000000000001px;height:12.899999999999977px;line-height:12.899999999999977px;font-size:8.3px;transform:scaleX(1.02);transform-origin:0 50%;">Maintenance</div>
<div class="t r " style="left:193.5px;width:45.0px;top:529.8000000000001px;height:12.899999999999977px;line-height:12.899999999999977px;">(300)</div>
<div class="t r " style="left:241px;width:44.19999999999999px;top:529.8000000000001px;height:12.899999999999977px;line-height:12.899999999999977px;">(300)</div>
<div class="t r " style="left:287px;width:45.30000000000001px;top:529.8000000000001px;height:12.899999999999977px;line-height:12.899999999999977px;">(300)</div>
<div class="t r " style="left:335px;width:43.80000000000001px;top:529.8000000000001px;height:12.899999999999977px;line-height:12.899999999999977px;">(300)</div>
<div class="t r " style="left:381.5px;width:50.5px;top:529.8000000000001px;height:12.899999999999977px;line-height:12.899999999999977px;">(300)</div>
<div class="t r " style="left:433px;width:45.80000000000001px;top:529.8000000000001px;height:12.899999999999977px;line-height:12.899999999999977px;">(300)</div>
<div class="t r " style="left:482px;width:44.200000000000045px;top:529.8000000000001px;height:12.899999999999977px;line-height:12.899999999999977px;">(300)</div>
<div class="t r " style="left:529px;width:51px;top:529.8000000000001px;height:12.899999999999977px;line-height:12.899999999999977px;">(300)</div>
<div class="t r " style="left:581px;width:44.200000000000045px;top:529.8000000000001px;height:12.899999999999977px;line-height:12.899999999999977px;">(300)</div>
<div class="t r " style="left:628px;width:43.799999999999955px;top:529.8000000000001px;height:12.899999999999977px;line-height:12.899999999999977px;">(300)</div>
<div class="t r " style="left:673.5px;width:51.299999999999955px;top:529.8000000000001px;height:12.899999999999977px;line-height:12.899999999999977px;">(300)</div>
<div class="t r " style="left:728px;width:50.60000000000002px;top:529.8000000000001px;height:12.899999999999977px;line-height:12.899999999999977px;">(300)</div>
<div class="t r " style="left:780.5px;width:45.5px;top:529.8000000000001px;height:12.899999999999977px;line-height:12.899999999999977px;">(300)</div>
<div class="t r " style="left:828px;width:44.200000000000045px;top:529.8000000000001px;height:12.899999999999977px;line-height:12.899999999999977px;">(300)</div>
<div class="t r " style="left:874.5px;width:45.799999999999955px;top:529.8000000000001px;height:12.899999999999977px;line-height:12.899999999999977px;">(300)</div>
<div class="t r " style="left:923px;width:44px;top:529.8000000000001px;height:12.899999999999977px;line-height:12.899999999999977px;">(3,600)</div>
<div class="t " style="left:55.5px;top:542.7px;height:12.899999999999977px;line-height:12.899999999999977px;font-size:8.3px;transform:scaleX(1.02);transform-origin:0 50%;">Licencing</div>
<div class="t r " style="left:193.5px;width:45.0px;top:542.7px;height:12.899999999999977px;line-height:12.899999999999977px;">(710)</div>
<div class="t r " style="left:241px;width:44.19999999999999px;top:542.7px;height:12.899999999999977px;line-height:12.899999999999977px;">(710)</div>
<div class="t r " style="left:287px;width:45.30000000000001px;top:542.7px;height:12.899999999999977px;line-height:12.899999999999977px;">(710)</div>
<div class="t r " style="left:335px;width:43.80000000000001px;top:542.7px;height:12.899999999999977px;line-height:12.899999999999977px;">(710)</div>
<div class="t r " style="left:381.5px;width:50.5px;top:542.7px;height:12.899999999999977px;line-height:12.899999999999977px;">(710)</div>
<div class="t r " style="left:433px;width:45.80000000000001px;top:542.7px;height:12.899999999999977px;line-height:12.899999999999977px;">(710)</div>
<div class="t r " style="left:482px;width:44.200000000000045px;top:542.7px;height:12.899999999999977px;line-height:12.899999999999977px;">(710)</div>
<div class="t r " style="left:529px;width:51px;top:542.7px;height:12.899999999999977px;line-height:12.899999999999977px;">(710)</div>
<div class="t r " style="left:581px;width:44.200000000000045px;top:542.7px;height:12.899999999999977px;line-height:12.899999999999977px;">(710)</div>
<div class="t r " style="left:628px;width:43.799999999999955px;top:542.7px;height:12.899999999999977px;line-height:12.899999999999977px;">(710)</div>
<div class="t r " style="left:673.5px;width:51.299999999999955px;top:542.7px;height:12.899999999999977px;line-height:12.899999999999977px;">(710)</div>
<div class="t r " style="left:728px;width:50.60000000000002px;top:542.7px;height:12.899999999999977px;line-height:12.899999999999977px;">(710)</div>
<div class="t r " style="left:780.5px;width:45.5px;top:542.7px;height:12.899999999999977px;line-height:12.899999999999977px;">(710)</div>
<div class="t r " style="left:828px;width:44.200000000000045px;top:542.7px;height:12.899999999999977px;line-height:12.899999999999977px;">(710)</div>
<div class="t r " style="left:874.5px;width:45.799999999999955px;top:542.7px;height:12.899999999999977px;line-height:12.899999999999977px;">(710)</div>
<div class="t r " style="left:923px;width:44px;top:542.7px;height:12.899999999999977px;line-height:12.899999999999977px;">(8,520)</div>
<div class="t " style="left:55.5px;top:555.6px;height:12.899999999999977px;line-height:12.899999999999977px;font-size:8.3px;transform:scaleX(1.02);transform-origin:0 50%;">Audit</div>
<div class="t r " style="left:193.5px;width:45.0px;top:555.6px;height:12.899999999999977px;line-height:12.899999999999977px;">(1,450)</div>
<div class="t r " style="left:241px;width:44.19999999999999px;top:555.6px;height:12.899999999999977px;line-height:12.899999999999977px;">(1,450)</div>
<div class="t r " style="left:287px;width:45.30000000000001px;top:555.6px;height:12.899999999999977px;line-height:12.899999999999977px;">(1,450)</div>
<div class="t r " style="left:335px;width:43.80000000000001px;top:555.6px;height:12.899999999999977px;line-height:12.899999999999977px;">(1,450)</div>
<div class="t r " style="left:381.5px;width:50.5px;top:555.6px;height:12.899999999999977px;line-height:12.899999999999977px;">(1,450)</div>
<div class="t r " style="left:433px;width:45.80000000000001px;top:555.6px;height:12.899999999999977px;line-height:12.899999999999977px;">(1,450)</div>
<div class="t r " style="left:482px;width:44.200000000000045px;top:555.6px;height:12.899999999999977px;line-height:12.899999999999977px;">(1,450)</div>
<div class="t r " style="left:529px;width:51px;top:555.6px;height:12.899999999999977px;line-height:12.899999999999977px;">(1,450)</div>
<div class="t r " style="left:581px;width:44.200000000000045px;top:555.6px;height:12.899999999999977px;line-height:12.899999999999977px;">(1,450)</div>
<div class="t r " style="left:628px;width:43.799999999999955px;top:555.6px;height:12.899999999999977px;line-height:12.899999999999977px;">(1,450)</div>
<div class="t r " style="left:673.5px;width:51.299999999999955px;top:555.6px;height:12.899999999999977px;line-height:12.899999999999977px;">(1,450)</div>
<div class="t r " style="left:728px;width:50.60000000000002px;top:555.6px;height:12.899999999999977px;line-height:12.899999999999977px;">(1,450)</div>
<div class="t r " style="left:780.5px;width:45.5px;top:555.6px;height:12.899999999999977px;line-height:12.899999999999977px;">(1,450)</div>
<div class="t r " style="left:828px;width:44.200000000000045px;top:555.6px;height:12.899999999999977px;line-height:12.899999999999977px;">(1,450)</div>
<div class="t r " style="left:874.5px;width:45.799999999999955px;top:555.6px;height:12.899999999999977px;line-height:12.899999999999977px;">(1,450)</div>
<div class="t r " style="left:923px;width:44px;top:555.6px;height:12.899999999999977px;line-height:12.899999999999977px;">(17,400)</div>
<div class="t bd" style="left:42.8px;top:351.7px;height:12.5px;line-height:12.5px;color:#fff;font-size:8.3px;">Total Revenue</div>
<div class="t r " style="left:193.5px;width:45.0px;top:351.7px;height:12.5px;line-height:12.5px;color:#fff;">2,998,214</div>
<div class="t r " style="left:241px;width:44.19999999999999px;top:351.7px;height:12.5px;line-height:12.5px;color:#fff;">3,106,885</div>
<div class="t r " style="left:287px;width:45.30000000000001px;top:351.7px;height:12.5px;line-height:12.5px;color:#fff;">3,048,834</div>
<div class="t r " style="left:335px;width:43.80000000000001px;top:351.7px;height:12.5px;line-height:12.5px;color:#fff;">3,147,584</div>
<div class="t r " style="left:381.5px;width:50.5px;top:351.7px;height:12.5px;line-height:12.5px;color:#fff;">3,080,734</div>
<div class="t r " style="left:433px;width:45.80000000000001px;top:351.7px;height:12.5px;line-height:12.5px;color:#fff;">3,119,809</div>
<div class="t r " style="left:482px;width:44.200000000000045px;top:351.7px;height:12.5px;line-height:12.5px;color:#fff;">3,124,599</div>
<div class="t r " style="left:529px;width:51px;top:351.7px;height:12.5px;line-height:12.5px;color:#fff;">3,159,789</div>
<div class="t r " style="left:581px;width:44.200000000000045px;top:351.7px;height:12.5px;line-height:12.5px;color:#fff;">3,183,144</div>
<div class="t r " style="left:628px;width:43.799999999999955px;top:351.7px;height:12.5px;line-height:12.5px;color:#fff;">3,240,764</div>
<div class="t r " style="left:673.5px;width:51.299999999999955px;top:351.7px;height:12.5px;line-height:12.5px;color:#fff;">3,260,459</div>
<div class="t r " style="left:728px;width:50.60000000000002px;top:351.7px;height:12.5px;line-height:12.5px;color:#fff;">3,237,774</div>
<div class="t r " style="left:780.5px;width:45.5px;top:351.7px;height:12.5px;line-height:12.5px;color:#fff;">6,805,987</div>
<div class="t r " style="left:828px;width:44.200000000000045px;top:351.7px;height:12.5px;line-height:12.5px;color:#fff;">6,835,774</div>
<div class="t r " style="left:874.5px;width:45.799999999999955px;top:351.7px;height:12.5px;line-height:12.5px;color:#fff;">6,861,931</div>
<div class="t r " style="left:923px;width:44px;top:351.7px;height:12.5px;line-height:12.5px;color:#fff;">37,708,589</div>
<div class="t bd" style="left:42.8px;top:364.2px;height:12.5px;line-height:12.5px;color:#f2f5fb;font-size:8.3px;transform:scaleX(0.91);transform-origin:0 50%;">Misc COGS</div>
<div class="t r " style="left:193.5px;width:45.0px;top:364.2px;height:12.5px;line-height:12.5px;color:#d3ddf1;">(5,665)</div>
<div class="t r " style="left:241px;width:44.19999999999999px;top:364.2px;height:12.5px;line-height:12.5px;color:#d3ddf1;">(5,665)</div>
<div class="t r " style="left:287px;width:45.30000000000001px;top:364.2px;height:12.5px;line-height:12.5px;color:#d3ddf1;">(5,665)</div>
<div class="t r " style="left:335px;width:43.80000000000001px;top:364.2px;height:12.5px;line-height:12.5px;color:#d3ddf1;">(5,665)</div>
<div class="t r " style="left:381.5px;width:50.5px;top:364.2px;height:12.5px;line-height:12.5px;color:#d3ddf1;">(5,665)</div>
<div class="t r " style="left:433px;width:45.80000000000001px;top:364.2px;height:12.5px;line-height:12.5px;color:#d3ddf1;">(5,665)</div>
<div class="t r " style="left:482px;width:44.200000000000045px;top:364.2px;height:12.5px;line-height:12.5px;color:#d3ddf1;">(5,665)</div>
<div class="t r " style="left:529px;width:51px;top:364.2px;height:12.5px;line-height:12.5px;color:#d3ddf1;">(5,665)</div>
<div class="t r " style="left:581px;width:44.200000000000045px;top:364.2px;height:12.5px;line-height:12.5px;color:#d3ddf1;">(5,665)</div>
<div class="t r " style="left:628px;width:43.799999999999955px;top:364.2px;height:12.5px;line-height:12.5px;color:#d3ddf1;">(5,665)</div>
<div class="t r " style="left:673.5px;width:51.299999999999955px;top:364.2px;height:12.5px;line-height:12.5px;color:#d3ddf1;">(5,665)</div>
<div class="t r " style="left:728px;width:50.60000000000002px;top:364.2px;height:12.5px;line-height:12.5px;color:#d3ddf1;">(5,665)</div>
<div class="t r " style="left:780.5px;width:45.5px;top:364.2px;height:12.5px;line-height:12.5px;color:#d3ddf1;">(5,665)</div>
<div class="t r " style="left:828px;width:44.200000000000045px;top:364.2px;height:12.5px;line-height:12.5px;color:#d3ddf1;">(5,665)</div>
<div class="t r " style="left:874.5px;width:45.799999999999955px;top:364.2px;height:12.5px;line-height:12.5px;color:#d3ddf1;">(5,665)</div>
<div class="t r " style="left:923px;width:44px;top:364.2px;height:12.5px;line-height:12.5px;color:#d3ddf1;">(67,980)</div>
<div class="t bd" style="left:42.8px;top:464.2px;height:12.5px;line-height:12.5px;color:#111;font-size:8.3px;transform:scaleX(0.94);transform-origin:0 50%;">GROSS MARGIN</div>
<div class="t r " style="left:193.5px;width:45.0px;top:464.2px;height:12.5px;line-height:12.5px;color:#222;">2,992,549</div>
<div class="t r " style="left:241px;width:44.19999999999999px;top:464.2px;height:12.5px;line-height:12.5px;color:#222;">3,101,220</div>
<div class="t r " style="left:287px;width:45.30000000000001px;top:464.2px;height:12.5px;line-height:12.5px;color:#222;">3,043,169</div>
<div class="t r " style="left:335px;width:43.80000000000001px;top:464.2px;height:12.5px;line-height:12.5px;color:#222;">3,141,919</div>
<div class="t r " style="left:381.5px;width:50.5px;top:464.2px;height:12.5px;line-height:12.5px;color:#222;">3,075,069</div>
<div class="t r " style="left:433px;width:45.80000000000001px;top:464.2px;height:12.5px;line-height:12.5px;color:#222;">3,114,144</div>
<div class="t r " style="left:482px;width:44.200000000000045px;top:464.2px;height:12.5px;line-height:12.5px;color:#222;">3,118,934</div>
<div class="t r " style="left:529px;width:51px;top:464.2px;height:12.5px;line-height:12.5px;color:#222;">3,154,124</div>
<div class="t r " style="left:581px;width:44.200000000000045px;top:464.2px;height:12.5px;line-height:12.5px;color:#222;">3,177,479</div>
<div class="t r " style="left:628px;width:43.799999999999955px;top:464.2px;height:12.5px;line-height:12.5px;color:#222;">3,235,099</div>
<div class="t r " style="left:673.5px;width:51.299999999999955px;top:464.2px;height:12.5px;line-height:12.5px;color:#222;">3,254,794</div>
<div class="t r " style="left:728px;width:50.60000000000002px;top:464.2px;height:12.5px;line-height:12.5px;color:#222;">3,232,109</div>
<div class="t r " style="left:780.5px;width:45.5px;top:464.2px;height:12.5px;line-height:12.5px;color:#222;">6,800,322</div>
<div class="t r " style="left:828px;width:44.200000000000045px;top:464.2px;height:12.5px;line-height:12.5px;color:#222;">6,830,109</div>
<div class="t r " style="left:874.5px;width:45.799999999999955px;top:464.2px;height:12.5px;line-height:12.5px;color:#222;">6,856,266</div>
<div class="t r " style="left:923px;width:44px;top:464.2px;height:12.5px;line-height:12.5px;color:#222;">37,640,609</div>
<div class="abs" style="left:922px;top:503.29999999999995px;width:0;height:0;border-top:4px solid #1e8c3a;border-left:4px solid transparent;"></div>
<div class="abs" style="left:922px;top:516.1999999999999px;width:0;height:0;border-top:4px solid #1e8c3a;border-left:4px solid transparent;"></div>
<div class="abs" style="left:922px;top:529.1px;width:0;height:0;border-top:4px solid #1e8c3a;border-left:4px solid transparent;"></div>
<div class="abs" style="left:922px;top:542.0px;width:0;height:0;border-top:4px solid #1e8c3a;border-left:4px solid transparent;"></div>
<div class="abs" style="left:0;top:48.5px;width:987px;height:15px;background:#f2f2f2;border-bottom:1px solid #d2d2d2;"></div>
<div class="abs" style="left:0;top:49px;width:17px;height:14.5px;background:#f2f2f2;border-right:1px solid #c8c8c8;"></div>
<svg class="abs" style="left:7px;top:53px" width="9" height="9"><polygon points="9,1 9,9 1,9" fill="#b5b5b5"/></svg>
<div class="abs" style="left:193px;top:49px;width:48px;height:14.5px;background:#d6d6d6;border-bottom:2px solid #217346;"></div>
<div class="abs" style="left:29.0px;top:53px;width:1px;height:10px;background:#dcdcdc;"></div>
<div class="t c" style="left:17px;width:12.5px;top:50.5px;height:14px;line-height:14px;font-size:9px;color:#4a4a4a;">A</div>
<div class="abs" style="left:40.0px;top:53px;width:1px;height:10px;background:#dcdcdc;"></div>
<div class="t c" style="left:29.5px;width:11.0px;top:50.5px;height:14px;line-height:14px;font-size:9px;color:#4a4a4a;">B</div>
<div class="abs" style="left:82.0px;top:53px;width:1px;height:10px;background:#dcdcdc;"></div>
<div class="t c" style="left:40.5px;width:42.0px;top:50.5px;height:14px;line-height:14px;font-size:9px;color:#4a4a4a;">C</div>
<div class="abs" style="left:124.0px;top:53px;width:1px;height:10px;background:#dcdcdc;"></div>
<div class="t c" style="left:82.5px;width:42.0px;top:50.5px;height:14px;line-height:14px;font-size:9px;color:#4a4a4a;">D</div>
<div class="abs" style="left:193.0px;top:53px;width:1px;height:10px;background:#dcdcdc;"></div>
<div class="t c" style="left:124.5px;width:69.0px;top:50.5px;height:14px;line-height:14px;font-size:9px;color:#4a4a4a;">E</div>
<div class="abs" style="left:240.5px;top:53px;width:1px;height:10px;background:#dcdcdc;"></div>
<div class="t c" style="left:193.5px;width:47.5px;top:50.5px;height:14px;line-height:14px;font-size:9px;color:#4a4a4a;">F</div>
<div class="abs" style="left:286.5px;top:53px;width:1px;height:10px;background:#dcdcdc;"></div>
<div class="t c" style="left:241px;width:46px;top:50.5px;height:14px;line-height:14px;font-size:9px;color:#4a4a4a;">G</div>
<div class="abs" style="left:334.5px;top:53px;width:1px;height:10px;background:#dcdcdc;"></div>
<div class="t c" style="left:287px;width:48px;top:50.5px;height:14px;line-height:14px;font-size:9px;color:#4a4a4a;">H</div>
<div class="abs" style="left:381.0px;top:53px;width:1px;height:10px;background:#dcdcdc;"></div>
<div class="t c" style="left:335px;width:46.5px;top:50.5px;height:14px;line-height:14px;font-size:9px;color:#4a4a4a;">I</div>
<div class="abs" style="left:432.5px;top:53px;width:1px;height:10px;background:#dcdcdc;"></div>
<div class="t c" style="left:381.5px;width:51.5px;top:50.5px;height:14px;line-height:14px;font-size:9px;color:#4a4a4a;">J</div>
<div class="abs" style="left:481.5px;top:53px;width:1px;height:10px;background:#dcdcdc;"></div>
<div class="t c" style="left:433px;width:49px;top:50.5px;height:14px;line-height:14px;font-size:9px;color:#4a4a4a;">K</div>
<div class="abs" style="left:528.5px;top:53px;width:1px;height:10px;background:#dcdcdc;"></div>
<div class="t c" style="left:482px;width:47px;top:50.5px;height:14px;line-height:14px;font-size:9px;color:#4a4a4a;">L</div>
<div class="abs" style="left:580.5px;top:53px;width:1px;height:10px;background:#dcdcdc;"></div>
<div class="t c" style="left:529px;width:52px;top:50.5px;height:14px;line-height:14px;font-size:9px;color:#4a4a4a;">M</div>
<div class="abs" style="left:627.5px;top:53px;width:1px;height:10px;background:#dcdcdc;"></div>
<div class="t c" style="left:581px;width:47px;top:50.5px;height:14px;line-height:14px;font-size:9px;color:#4a4a4a;">N</div>
<div class="abs" style="left:673.0px;top:53px;width:1px;height:10px;background:#dcdcdc;"></div>
<div class="t c" style="left:628px;width:45.5px;top:50.5px;height:14px;line-height:14px;font-size:9px;color:#4a4a4a;">O</div>
<div class="abs" style="left:727.5px;top:53px;width:1px;height:10px;background:#dcdcdc;"></div>
<div class="t c" style="left:673.5px;width:54.5px;top:50.5px;height:14px;line-height:14px;font-size:9px;color:#4a4a4a;">P</div>
<div class="abs" style="left:780.0px;top:53px;width:1px;height:10px;background:#dcdcdc;"></div>
<div class="t c" style="left:728px;width:52.5px;top:50.5px;height:14px;line-height:14px;font-size:9px;color:#4a4a4a;">Q</div>
<div class="abs" style="left:827.5px;top:53px;width:1px;height:10px;background:#dcdcdc;"></div>
<div class="t c" style="left:780.5px;width:47.5px;top:50.5px;height:14px;line-height:14px;font-size:9px;color:#4a4a4a;">R</div>
<div class="abs" style="left:874.0px;top:53px;width:1px;height:10px;background:#dcdcdc;"></div>
<div class="t c" style="left:828px;width:46.5px;top:50.5px;height:14px;line-height:14px;font-size:9px;color:#4a4a4a;">S</div>
<div class="abs" style="left:922.5px;top:53px;width:1px;height:10px;background:#dcdcdc;"></div>
<div class="t c" style="left:874.5px;width:48.5px;top:50.5px;height:14px;line-height:14px;font-size:9px;color:#4a4a4a;">T</div>
<div class="abs" style="left:968.5px;top:53px;width:1px;height:10px;background:#dcdcdc;"></div>
<div class="t c" style="left:923px;width:46px;top:50.5px;height:14px;line-height:14px;font-size:9px;color:#4a4a4a;">U</div>
<div class="abs" style="left:0;top:63.5px;width:17.6px;height:496px;background:#f7f7f7;border-right:1px solid #c8c8c8;"></div>
<div class="abs" style="left:0;top:75.0px;width:16px;height:1px;background:#dedede;"></div>
<div class="t c" style="left:0.5px;width:17px;top:64.1px;height:12.0px;line-height:12.0px;font-size:9.2px;color:#3a3a3a;">1</div>
<div class="abs" style="left:0;top:91.0px;width:16px;height:1px;background:#dedede;"></div>
<div class="t c" style="left:0.5px;width:17px;top:76.1px;height:16.0px;line-height:16.0px;font-size:9.2px;color:#3a3a3a;">2</div>
<div class="abs" style="left:0;top:103.5px;width:16px;height:1px;background:#dedede;"></div>
<div class="t c" style="left:0.5px;width:17px;top:92.1px;height:12.5px;line-height:12.5px;font-size:9.2px;color:#3a3a3a;">3</div>
<div class="abs" style="left:0;top:115.5px;width:16px;height:1px;background:#dedede;"></div>
<div class="t c" style="left:0.5px;width:17px;top:104.6px;height:12px;line-height:12px;font-size:9.2px;color:#3a3a3a;">4</div>
<div class="abs" style="left:0;top:128.0px;width:16px;height:1px;background:#dedede;"></div>
<div class="t c" style="left:0.5px;width:17px;top:116.6px;height:12.5px;line-height:12.5px;font-size:9.2px;color:#3a3a3a;">5</div>
<div class="abs" style="left:0;top:140.5px;width:16px;height:1px;background:#dedede;"></div>
<div class="t c" style="left:0.5px;width:17px;top:129.1px;height:12.5px;line-height:12.5px;font-size:9.2px;color:#3a3a3a;">6</div>
<div class="abs" style="left:0;top:153.5px;width:16px;height:1px;background:#dedede;"></div>
<div class="t c" style="left:0.5px;width:17px;top:141.6px;height:13px;line-height:13px;font-size:9.2px;color:#3a3a3a;">7</div>
<div class="abs" style="left:0;top:166.2px;width:16px;height:1px;background:#dedede;"></div>
<div class="t c" style="left:0.5px;width:17px;top:154.6px;height:12.699999999999989px;line-height:12.699999999999989px;font-size:9.2px;color:#3a3a3a;">8</div>
<div class="abs" style="left:0;top:178.8px;width:16px;height:1px;background:#dedede;"></div>
<div class="t c" style="left:0.5px;width:17px;top:167.29999999999998px;height:12.600000000000023px;line-height:12.600000000000023px;font-size:9.2px;color:#3a3a3a;">9</div>
<div class="abs" style="left:0;top:191.5px;width:16px;height:1px;background:#dedede;"></div>
<div class="t c" style="left:0.5px;width:17px;top:179.9px;height:12.699999999999989px;line-height:12.699999999999989px;font-size:9.2px;color:#3a3a3a;">10</div>
<div class="abs" style="left:0;top:200.0px;width:16px;height:1px;background:#dedede;"></div>
<div class="t c" style="left:0.5px;width:17px;top:191.1px;height:8.5px;line-height:8.5px;font-size:9.2px;color:#3a3a3a;">11</div>
<div class="abs" style="left:0;top:212.5px;width:16px;height:1px;background:#dedede;"></div>
<div class="t c" style="left:0.5px;width:17px;top:201.1px;height:12.5px;line-height:12.5px;font-size:9.2px;color:#3a3a3a;">12</div>
<div class="abs" style="left:0;top:225.0px;width:16px;height:1px;background:#dedede;"></div>
<div class="t c" style="left:0.5px;width:17px;top:213.6px;height:12.5px;line-height:12.5px;font-size:9.2px;color:#3a3a3a;">13</div>
<div class="abs" style="left:0;top:237.5px;width:16px;height:1px;background:#dedede;"></div>
<div class="t c" style="left:0.5px;width:17px;top:226.1px;height:12.5px;line-height:12.5px;font-size:9.2px;color:#3a3a3a;">14</div>
<div class="abs" style="left:0;top:250.0px;width:16px;height:1px;background:#dedede;"></div>
<div class="t c" style="left:0.5px;width:17px;top:238.6px;height:12.5px;line-height:12.5px;font-size:9.2px;color:#3a3a3a;">15</div>
<div class="abs" style="left:0;top:262.5px;width:16px;height:1px;background:#dedede;"></div>
<div class="t c" style="left:0.5px;width:17px;top:251.1px;height:12.5px;line-height:12.5px;font-size:9.2px;color:#3a3a3a;">16</div>
<div class="abs" style="left:0;top:275.0px;width:16px;height:1px;background:#dedede;"></div>
<div class="t c" style="left:0.5px;width:17px;top:263.6px;height:12.5px;line-height:12.5px;font-size:9.2px;color:#3a3a3a;">17</div>
<div class="abs" style="left:0;top:287.5px;width:16px;height:1px;background:#dedede;"></div>
<div class="t c" style="left:0.5px;width:17px;top:276.1px;height:12.5px;line-height:12.5px;font-size:9.2px;color:#3a3a3a;">18</div>
<div class="abs" style="left:0;top:300.0px;width:16px;height:1px;background:#dedede;"></div>
<div class="t c" style="left:0.5px;width:17px;top:288.6px;height:12.5px;line-height:12.5px;font-size:9.2px;color:#3a3a3a;">19</div>
<div class="abs" style="left:0;top:312.5px;width:16px;height:1px;background:#dedede;"></div>
<div class="t c" style="left:0.5px;width:17px;top:301.1px;height:12.5px;line-height:12.5px;font-size:9.2px;color:#3a3a3a;">20</div>
<div class="abs" style="left:0;top:325.0px;width:16px;height:1px;background:#dedede;"></div>
<div class="t c" style="left:0.5px;width:17px;top:313.6px;height:12.5px;line-height:12.5px;font-size:9.2px;color:#3a3a3a;">21</div>
<div class="abs" style="left:0;top:337.5px;width:16px;height:1px;background:#dedede;"></div>
<div class="t c" style="left:0.5px;width:17px;top:326.1px;height:12.5px;line-height:12.5px;font-size:9.2px;color:#3a3a3a;">22</div>
<div class="abs" style="left:0;top:350.0px;width:16px;height:1px;background:#dedede;"></div>
<div class="t c" style="left:0.5px;width:17px;top:338.6px;height:12.5px;line-height:12.5px;font-size:9.2px;color:#3a3a3a;">23</div>
<div class="abs" style="left:0;top:362.5px;width:16px;height:1px;background:#dedede;"></div>
<div class="t c" style="left:0.5px;width:17px;top:351.1px;height:12.5px;line-height:12.5px;font-size:9.2px;color:#3a3a3a;">24</div>
<div class="abs" style="left:0;top:375.0px;width:16px;height:1px;background:#dedede;"></div>
<div class="t c" style="left:0.5px;width:17px;top:363.6px;height:12.5px;line-height:12.5px;font-size:9.2px;color:#3a3a3a;">25</div>
<div class="abs" style="left:0;top:387.5px;width:16px;height:1px;background:#dedede;"></div>
<div class="t c" style="left:0.5px;width:17px;top:376.1px;height:12.5px;line-height:12.5px;font-size:9.2px;color:#3a3a3a;">26</div>
<div class="abs" style="left:0;top:400.0px;width:16px;height:1px;background:#dedede;"></div>
<div class="t c" style="left:0.5px;width:17px;top:388.6px;height:12.5px;line-height:12.5px;font-size:9.2px;color:#3a3a3a;">27</div>
<div class="abs" style="left:0;top:412.5px;width:16px;height:1px;background:#dedede;"></div>
<div class="t c" style="left:0.5px;width:17px;top:401.1px;height:12.5px;line-height:12.5px;font-size:9.2px;color:#3a3a3a;">28</div>
<div class="abs" style="left:0;top:425.0px;width:16px;height:1px;background:#dedede;"></div>
<div class="t c" style="left:0.5px;width:17px;top:413.6px;height:12.5px;line-height:12.5px;font-size:9.2px;color:#3a3a3a;">29</div>
<div class="abs" style="left:0;top:437.5px;width:16px;height:1px;background:#dedede;"></div>
<div class="t c" style="left:0.5px;width:17px;top:426.1px;height:12.5px;line-height:12.5px;font-size:9.2px;color:#3a3a3a;">30</div>
<div class="abs" style="left:0;top:450.0px;width:16px;height:1px;background:#dedede;"></div>
<div class="t c" style="left:0.5px;width:17px;top:438.6px;height:12.5px;line-height:12.5px;font-size:9.2px;color:#3a3a3a;">31</div>
<div class="abs" style="left:0;top:462.5px;width:16px;height:1px;background:#dedede;"></div>
<div class="t c" style="left:0.5px;width:17px;top:451.1px;height:12.5px;line-height:12.5px;font-size:9.2px;color:#3a3a3a;">32</div>
<div class="abs" style="left:0;top:475.0px;width:16px;height:1px;background:#dedede;"></div>
<div class="t c" style="left:0.5px;width:17px;top:463.6px;height:12.5px;line-height:12.5px;font-size:9.2px;color:#3a3a3a;">33</div>
<div class="abs" style="left:0;top:489.4px;width:16px;height:1px;background:#dedede;"></div>
<div class="t c" style="left:0.5px;width:17px;top:476.1px;height:14.399999999999977px;line-height:14.399999999999977px;font-size:9.2px;color:#3a3a3a;">34</div>
<div class="abs" style="left:0;top:502.29999999999995px;width:16px;height:1px;background:#dedede;"></div>
<div class="t c" style="left:0.5px;width:17px;top:490.5px;height:12.899999999999977px;line-height:12.899999999999977px;font-size:9.2px;color:#3a3a3a;">35</div>
<div class="abs" style="left:0;top:515.1999999999999px;width:16px;height:1px;background:#dedede;"></div>
<div class="t c" style="left:0.5px;width:17px;top:503.4px;height:12.899999999999977px;line-height:12.899999999999977px;font-size:9.2px;color:#3a3a3a;">36</div>
<div class="abs" style="left:0;top:528.1px;width:16px;height:1px;background:#dedede;"></div>
<div class="t c" style="left:0.5px;width:17px;top:516.3px;height:12.900000000000091px;line-height:12.900000000000091px;font-size:9.2px;color:#3a3a3a;">37</div>
<div class="abs" style="left:0;top:541.0px;width:16px;height:1px;background:#dedede;"></div>
<div class="t c" style="left:0.5px;width:17px;top:529.2px;height:12.899999999999977px;line-height:12.899999999999977px;font-size:9.2px;color:#3a3a3a;">38</div>
<div class="abs" style="left:0;top:553.9px;width:16px;height:1px;background:#dedede;"></div>
<div class="t c" style="left:0.5px;width:17px;top:542.1px;height:12.899999999999977px;line-height:12.899999999999977px;font-size:9.2px;color:#3a3a3a;">39</div>
<div class="abs" style="left:0;top:566.8px;width:16px;height:1px;background:#dedede;"></div>
<div class="t c" style="left:0.5px;width:17px;top:555.0px;height:12.899999999999977px;line-height:12.899999999999977px;font-size:9.2px;color:#3a3a3a;">40</div>
<div class="abs" style="left:987.5px;top:63.5px;width:12.5px;height:496px;background:#f9f9f9;border-left:1px solid #dcdcdc;"></div>
<div class="abs" style="left:991px;top:61.5px;width:5.5px;height:100px;background:#6e6e6e;border-radius:3px;"></div>
<svg class="abs" style="left:990px;top:52px" width="8" height="7"><polygon points="4,1 7.5,6 0.5,6" fill="#6b6b6b"/></svg>
<svg class="abs" style="left:990px;top:552px" width="8" height="7"><polygon points="0.5,1 7.5,1 4,6" fill="#333"/></svg>
<div class="abs" style="left:987px;top:49px;width:13px;height:14.5px;background:#f3f3f3;"></div>
<svg class="abs" style="left:990px;top:52px" width="8" height="7"><polygon points="4,1 7.5,6 0.5,6" fill="#6b6b6b"/></svg>
<div class="abs" style="left:0;top:0;width:1000px;height:30.5px;background:#127c42;"></div>
<div class="abs" style="left:0;top:28px;width:1000px;height:2.5px;background:#0e6d38;"></div>
<svg class="abs" style="left:10.5px;top:10px" width="11" height="12"><rect x="0.6" y="0.6" width="9.6" height="10.6" rx="1.6" fill="none" stroke="#eaf5ee" stroke-width="1.2"/><rect x="0.6" y="0.6" width="5.2" height="10.6" rx="1" fill="#eaf5ee"/><path d="M2.2,4.4 L4.4,7.2 M4.4,4.4 L2.2,7.2" stroke="#127c42" stroke-width="1"/><path d="M8,4 V8.5" stroke="#127c42" stroke-width="1"/><circle cx="8" cy="2.6" r="0.7" fill="#127c42"/></svg>
<svg class="abs" style="left:31px;top:10px" width="12" height="12"><rect x="0.6" y="0.6" width="10.2" height="10.8" rx="1" fill="none" stroke="#eaf5ee" stroke-width="1.1"/><rect x="3.2" y="0.6" width="5" height="3.6" fill="none" stroke="#eaf5ee" stroke-width="1"/><rect x="2.6" y="6.4" width="6.2" height="5" fill="none" stroke="#eaf5ee" stroke-width="1"/></svg>
<svg class="abs" style="left:49.5px;top:9.5px" width="20" height="14"><path d="M1.5,1.5 L1.5,5.8 L5.8,5.8" fill="none" stroke="#eaf5ee" stroke-width="1.2"/><path d="M2,5.4 C4,2.2 9,1.8 10.2,5 C11,8 8.5,10.8 5.5,12.5" fill="none" stroke="#eaf5ee" stroke-width="1.2"/><path d="M14.5,7.5 L17.5,7.5" stroke="#cfe6d7" stroke-width="1"/></svg>
<svg class="abs" style="left:73px;top:9px" width="24" height="14"><path d="M10,2 L10,6 L6,6" fill="none" stroke="#5fa57a" stroke-width="1.1"/><path d="M9.5,5.5 C7,2.5 2,2.5 1.5,6.5 C1,9.5 4,11.5 7,12" fill="none" stroke="#5fa57a" stroke-width="1.1"/><path d="M17,7.5 L20,7.5" stroke="#5fa57a" stroke-width="1"/></svg>
<svg class="abs" style="left:101px;top:11px" width="8" height="10"><path d="M1,2.5 L7,2.5" stroke="#e8f3ec" stroke-width="1"/><polygon points="1,5 7,5 4,8" fill="#e8f3ec"/></svg>
<div class="t" style="left:117.6px;top:9px;height:15px;line-height:15px;font-size:9.3px;transform:scaleX(0.81);transform-origin:0 50%;color:#eaf4ee;">Telehealth 20 Years Financial Model.xlsx&nbsp;&nbsp;–&nbsp;&nbsp;Excel</div>
<div class="abs" style="left:385.5px;top:5.5px;width:240px;height:20.5px;background:#d3e4d9;border-radius:3px;border:1px solid #c0d8c8;"></div>
<svg class="abs" style="left:394px;top:10px" width="11" height="11"><circle cx="6.5" cy="4.5" r="3.2" fill="none" stroke="#4a6655" stroke-width="1"/><path d="M4.2,6.8 L1,10" stroke="#4a6655" stroke-width="1.1"/></svg>
<div class="t" style="left:412px;top:8px;height:14px;line-height:14px;font-size:8.8px;color:#3f5d4b;">Search</div>
<div class="abs" style="left:884px;top:8px;width:14px;height:14px;border-radius:7px;background:#0c4a52;"></div>
<div class="t c" style="left:884px;top:8px;width:14px;height:14px;line-height:14px;font-size:5.5px;color:#cfe;">RS</div>
<div class="abs" style="left:919px;top:15px;width:8px;height:1px;background:#eaf4ee;"></div>
<svg class="abs" style="left:948px;top:11px" width="10" height="9"><rect x="1" y="2.5" width="6" height="6" rx="1.5" fill="none" stroke="#eaf4ee" stroke-width="1.1"/><path d="M3,2.5 Q3,0.8 4.5,0.8 L7.5,0.8 Q9,0.8 9,2.3 L9,5 Q9,6.5 7.2,6.5" fill="none" stroke="#eaf4ee" stroke-width="1"/></svg>
<svg class="abs" style="left:980px;top:10px" width="10" height="10"><path d="M1,1 L9,9 M9,1 L1,9" stroke="#eaf4ee" stroke-width="1.1"/></svg>
<div class="abs" style="left:0;top:30.5px;width:1000px;height:18.5px;background:#e9eaed;"></div>
<div class="abs" style="left:0;top:30.5px;width:1000px;height:1px;background:#b7dcc4;"></div>
<div class="t" style="left:13.8px;top:34.8px;height:14px;line-height:14px;font-size:8.4px;color:#333;">File</div>
<div class="t" style="left:44.6px;top:34.8px;height:14px;line-height:14px;font-size:8.6px;color:#333;">Home</div>
<div class="t" style="left:80.5px;top:34.8px;height:14px;line-height:14px;font-size:8.6px;color:#333;">Insert</div>
<div class="t" style="left:116px;top:34.8px;height:14px;line-height:14px;font-size:8.6px;color:#333;">Draw</div>
<div class="t" style="left:149.5px;top:34.8px;height:14px;line-height:14px;font-size:8.6px;color:#333;">Page Layout</div>
<div class="t" style="left:212px;top:34.8px;height:14px;line-height:14px;font-size:8.6px;color:#333;">Formulas</div>
<div class="t" style="left:260px;top:34.8px;height:14px;line-height:14px;font-size:8.6px;color:#333;">Data</div>
<div class="t" style="left:292px;top:34.8px;height:14px;line-height:14px;font-size:8.6px;color:#333;">Review</div>
<div class="t" style="left:333px;top:34.8px;height:14px;line-height:14px;font-size:8.6px;color:#333;">View</div>
<div class="t" style="left:365px;top:34.8px;height:14px;line-height:14px;font-size:8.6px;color:#333;">Developer</div>
<div class="t" style="left:418px;top:34.8px;height:14px;line-height:14px;font-size:8.6px;color:#333;">Help</div>
<div class="t" style="left:449px;top:34.8px;height:14px;line-height:14px;font-size:8.6px;color:#333;">Power Pivot</div>
<div class="abs" style="left:946px;top:33.5px;width:46px;height:15px;background:#167a3f;border-radius:2px;"></div>
<svg class="abs" style="left:950px;top:36px" width="10" height="10"><rect x="1" y="4" width="7" height="5" fill="none" stroke="#e6f2ea" stroke-width="1"/><path d="M4,6 L8.5,1.5 M6,1.5 L8.5,1.5 L8.5,4" fill="none" stroke="#e6f2ea" stroke-width="1"/></svg>
<div class="t" style="left:960px;top:34.5px;height:14px;line-height:14px;font-size:8.6px;transform:scaleX(0.92);transform-origin:0 50%;color:#f4fbf6;">Share</div>
<svg class="abs" style="left:985px;top:39px" width="5" height="4"><path d="M0.5,0.5 L2.5,2.5 L4.5,0.5" fill="none" stroke="#fff" stroke-width="0.9"/></svg>
<div class="abs" style="left:0;top:559.5px;width:1000px;height:18.5px;background:#e5e7eb;border-top:1px solid #dcdde0;"></div>
<svg class="abs" style="left:15px;top:565px" width="8" height="9"><path d="M5.5,1 L2,4.5 L5.5,8" fill="none" stroke="#a0a0a0" stroke-width="1"/></svg>
<svg class="abs" style="left:35px;top:565px" width="8" height="9"><path d="M2.5,1 L6,4.5 L2.5,8" fill="none" stroke="#555" stroke-width="1"/></svg>
<div class="t" style="left:79px;top:563px;height:14px;line-height:14px;font-size:8.90px;transform:scaleX(1.049);transform-origin:0 50%;color:#262626;">How To</div>
<div class="abs" style="left:121.5px;top:560.5px;width:72px;height:16px;background:#faf8cc;"></div>
<div class="t" style="left:128px;top:563px;height:14px;line-height:14px;font-size:8.90px;transform:scaleX(1.011);transform-origin:0 50%;color:#262626;">2025 Accounts</div>
<div class="t" style="left:204.3px;top:563px;height:14px;line-height:14px;font-size:8.90px;transform:scaleX(0.997);transform-origin:0 50%;color:#262626;">2025 MRR Dashboard</div>
<div class="abs" style="left:303.5px;top:560.5px;width:43.60000000000002px;height:16px;background:#f7f7f7;"></div>
<div class="t" style="left:310px;top:560.5px;height:14px;line-height:14px;font-size:8.90px;transform:scaleX(0.997);transform-origin:0 50%;color:#262626;font-weight:bold;">IS 2025</div>
<div class="abs" style="left:310px;top:574.5px;width:30.600000000000023px;height:1.5px;background:#217346;"></div>
<div class="abs" style="left:349.5px;top:560.5px;width:45.69999999999999px;height:16px;background:#faf8cc;"></div>
<div class="t" style="left:356px;top:563px;height:14px;line-height:14px;font-size:8.90px;transform:scaleX(0.957);transform-origin:0 50%;color:#262626;">CF 2025</div>
<div class="t" style="left:405.6px;top:563px;height:14px;line-height:14px;font-size:8.90px;transform:scaleX(0.948);transform-origin:0 50%;color:#262626;">BS 2025</div>
<div class="t" style="left:456.6px;top:563px;height:14px;line-height:14px;font-size:8.90px;transform:scaleX(0.998);transform-origin:0 50%;color:#262626;">Statements Summary 2025</div>
<div class="abs" style="left:575.9px;top:560.5px;width:62.0px;height:16px;background:#faf8cc;"></div>
<div class="t" style="left:582.4px;top:563px;height:14px;line-height:14px;font-size:8.90px;transform:scaleX(0.935);transform-origin:0 50%;color:#262626;">CAPEX 2025</div>
<div class="abs" style="left:642.1px;top:560.5px;width:54.0px;height:16px;background:#faf8cc;"></div>
<div class="t" style="left:648.6px;top:563px;height:14px;line-height:14px;font-size:8.90px;transform:scaleX(0.921);transform-origin:0 50%;color:#262626;">OPEX2025</div>
<div class="abs" style="left:701.5px;top:560.5px;width:71.89999999999998px;height:16px;background:#faf8cc;"></div>
<div class="t" style="left:708px;top:563px;height:14px;line-height:14px;font-size:8.90px;transform:scaleX(1.009);transform-origin:0 50%;color:#262626;">2026 Accounts</div>
<div class="abs" style="left:778.0px;top:560.5px;width:101.5px;height:16px;background:#faf8cc;"></div>
<div class="t" style="left:784.5px;top:563px;height:14px;line-height:14px;font-size:8.90px;transform:scaleX(0.999);transform-origin:0 50%;color:#262626;">2026 MRR Dashboard</div>
<div class="abs" style="left:886.5px;top:567.5px;width:2px;height:2px;background:#333;"></div><div class="abs" style="left:889.8px;top:567.5px;width:2px;height:2px;background:#333;"></div><div class="abs" style="left:893px;top:567.5px;width:2px;height:2px;background:#333;"></div>
<div class="abs" style="left:906px;top:568px;width:9px;height:1.2px;background:#333;"></div><div class="abs" style="left:910px;top:564px;width:1.2px;height:9px;background:#333;"></div>
<div class="abs" style="left:931px;top:565px;width:1.5px;height:1.5px;background:#555;"></div><div class="abs" style="left:931px;top:568px;width:1.5px;height:1.5px;background:#555;"></div><div class="abs" style="left:931px;top:571px;width:1.5px;height:1.5px;background:#555;"></div>
<svg class="abs" style="left:945px;top:565px" width="6" height="8"><polygon points="5,0.5 5,7.5 1,4" fill="#444"/></svg>
<div class="abs" style="left:953.5px;top:566.5px;width:13.5px;height:5.5px;border-radius:3px;background:#555;"></div>
<svg class="abs" style="left:979px;top:565px" width="6" height="8"><polygon points="1,0.5 1,7.5 5,4" fill="#444"/></svg>
<div class="abs" style="left:0;top:578px;width:1000px;height:14px;background:#f1f1f1;border-top:1px solid #f7f7f7;"></div>
<div class="t" style="left:8px;top:582px;height:12px;line-height:12px;font-size:6.8px;transform:scaleX(0.92);transform-origin:0 50%;color:#333;">Ready</div>
<svg class="abs" style="left:40px;top:583px" width="10" height="9"><rect x="0.5" y="0.5" width="9" height="8" fill="none" stroke="#555" stroke-width="1"/><circle cx="5" cy="5" r="2" fill="#555"/></svg>
<svg class="abs" style="left:60px;top:582px" width="10" height="10"><path d="M5,0.5 L6,2.5 L9,3 L6.5,5 L7,8.5 L5,7 L3,8.5 L3.5,5 L1,3 L4,2.5 Z" fill="none" stroke="#444" stroke-width="0.9"/></svg>
<div class="t" style="left:72px;top:582px;height:12px;line-height:12px;font-size:7.4px;transform:scaleX(0.9);transform-origin:0 50%;color:#222;font-weight:bold;">Accessibility: Investigate</div>
<div class="abs" style="left:808px;top:579px;width:23px;height:13px;background:#e0e0e0;"></div>
<svg class="abs" style="left:813px;top:582px" width="11" height="10"><rect x="0.5" y="0.5" width="10" height="9" fill="none" stroke="#444" stroke-width="1"/><path d="M3.8,0.5 V9.5 M7.2,0.5 V9.5 M0.5,3.5 H10.5 M0.5,6.5 H10.5" stroke="#444" stroke-width="0.8"/></svg>
<svg class="abs" style="left:840px;top:582px" width="11" height="10"><rect x="0.5" y="0.5" width="10" height="9" fill="none" stroke="#555" stroke-width="1"/><path d="M2.5,2 V8 M8.5,2 V8 M5.5,2 V8" stroke="#555" stroke-width="0.8"/></svg>
<svg class="abs" style="left:865px;top:582px" width="11" height="10"><rect x="0.5" y="0.5" width="10" height="9" fill="none" stroke="#555" stroke-width="1"/><path d="M5.5,0.5 V5.5 H10.5" fill="none" stroke="#555" stroke-width="0.8"/></svg>
<div class="abs" style="left:886px;top:587px;width:5px;height:1px;background:#777;"></div>
<div class="abs" style="left:893px;top:587px;width:71px;height:1px;background:#777;"></div>
<div class="abs" style="left:927.5px;top:583px;width:2.5px;height:8px;background:#444;"></div>
<div class="abs" style="left:965px;top:587px;width:5px;height:1px;background:#777;"></div><div class="abs" style="left:967px;top:585px;width:1px;height:5px;background:#777;"></div>
<div class="t" style="left:977px;top:582px;height:12px;line-height:12px;font-size:7px;color:#444;">100%</div>
</body></html>
